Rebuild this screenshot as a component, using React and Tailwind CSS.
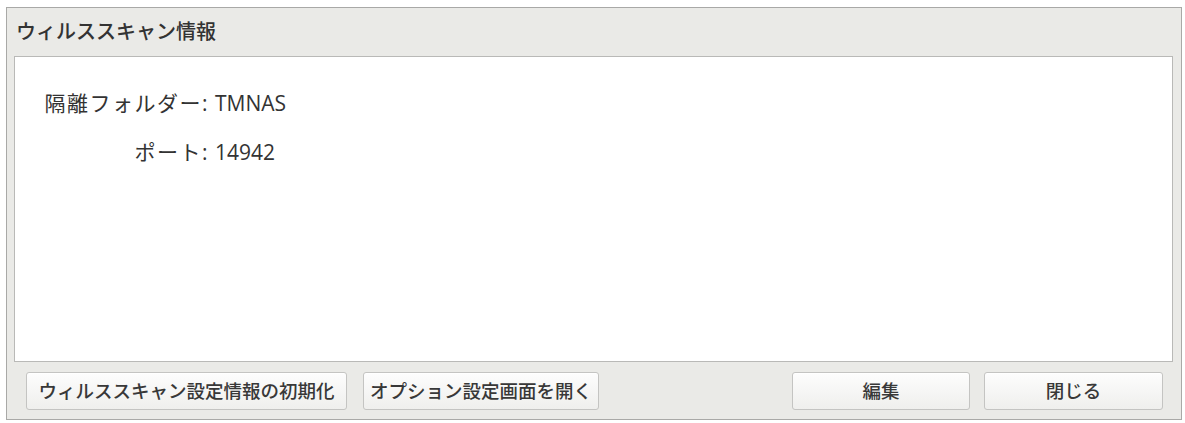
import React from 'react'

const uiFont = { fontFamily: '"Open Sans", "Noto Sans CJK JP", sans-serif' }

const PanelButton = ({ text, className = '' }) => (
  <button
    type="button"
    className={`h-[38px] rounded-[3px] border border-[#c4c4c2] bg-gradient-to-b from-[#fdfdfd] to-[#efefed] text-[18.5px] font-medium text-[#383838] shadow-[inset_0_1px_0_#ffffff] ${className}`}
  >
    {text}
  </button>
)

const InfoRow = ({ label, value }) => (
  <>
    <div className="whitespace-nowrap text-right tracking-[1.5px]">{label}</div>
    <div className="whitespace-nowrap">{value}</div>
  </>
)

const App = () => {
  return (
    <div className="min-h-screen bg-white pl-[6px] pt-[7px]" style={uiFont}>
      <div className="flex h-[413px] w-[1176px] flex-col border border-[#a9a9a7] bg-[#eaeae7]">
        <div className="flex h-[48px] items-center pl-[9px] text-[20px] font-medium text-[#333333]">
          ウィルススキャン情報
        </div>

        <div className="ml-[7px] mr-[8px] h-[306px] border border-[#b9b9b7] bg-white">
          <div className="ml-[22px] mt-[32px] grid grid-cols-[172px_auto] gap-x-[6px] gap-y-[20px] text-[21px] leading-[29px] text-[#333333]">
            <InfoRow label="隔離フォルダー:" value="TMNAS" />
            <InfoRow label="ポート:" value="14942" />
          </div>
        </div>

        <div className="flex flex-1 items-center pl-[19px] pr-[18px]">
          <PanelButton text="ウィルススキャン設定情報の初期化" className="w-[321px]" />
          <PanelButton text="オプション設定画面を開く" className="ml-[16px] w-[236px]" />
          <div className="flex-1" />
          <PanelButton text="編集" className="w-[178px]" />
          <PanelButton text="閉じる" className="ml-[14px] w-[179px]" />
        </div>
      </div>
    </div>
  )
}

export default App
